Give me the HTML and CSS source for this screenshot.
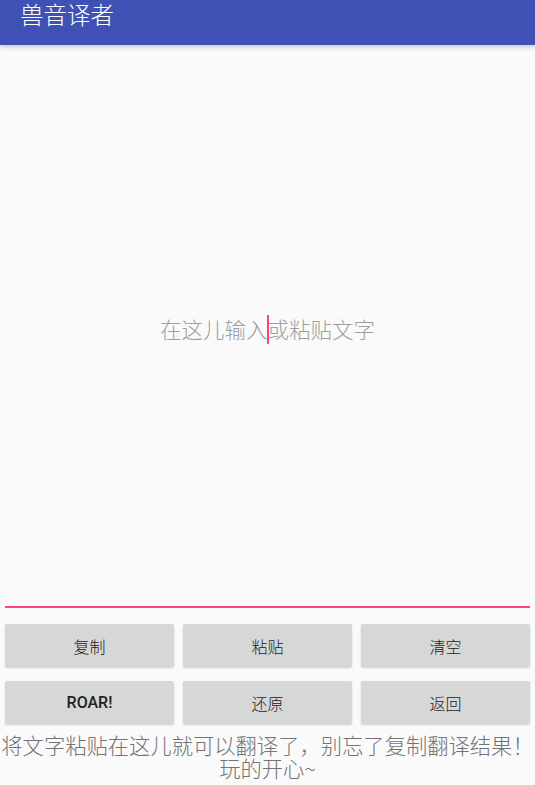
FILE: index.html
```html
<!DOCTYPE html>
<html lang="zh">
<head>
<meta charset="utf-8">
<title>兽音译者</title>
<link rel="stylesheet" href="styles.css">
</head>
<body>
<div class="app">
  <header class="toolbar"><span class="title">兽音译者</span></header>
  <main class="editor">
    <div class="hint"><span>在这儿输入</span><span class="cursor"></span><span>或粘贴文字</span></div>
  </main>
  <div class="underline"></div>
  <div class="buttons">
    <button class="btn">复制</button>
    <button class="btn">粘贴</button>
    <button class="btn">清空</button>
    <button class="btn btn-latin">ROAR!</button>
    <button class="btn">还原</button>
    <button class="btn">返回</button>
  </div>
  <p class="tip">将文字粘贴在这儿就可以翻译了，别忘了复制翻译结果！玩的开心~</p>
</div>
</body>
</html>
```
FILE: styles.css
```css
html, body {
  margin: 0;
  padding: 0;
  background: #fafafa;
}
body {
  font-family: "Noto Sans CJK SC", "Noto Sans", Roboto, sans-serif;
}
.app {
  width: 535px;
  height: 785px;
  display: flex;
  flex-direction: column;
  overflow: hidden;
}
.toolbar {
  height: 45px;
  flex: 0 0 45px;
  background: #3f51b5;
  box-shadow: 0 2px 5px rgba(0, 0, 0, 0.22);
  position: relative;
  z-index: 1;
  box-sizing: border-box;
  padding-left: 20px;
}
.title {
  display: block;
  color: #ffffff;
  font-size: 23.5px;
  line-height: 34px;
  font-weight: 300;
  margin-top: -3px;
}
.editor {
  flex: 0 0 561px;
  display: flex;
  align-items: center;
  justify-content: center;
  box-sizing: border-box;
  padding-top: 7px;
}
.hint {
  color: #9e9e9e;
  font-size: 21.5px;
  line-height: 30px;
  font-weight: 300;
  white-space: nowrap;
}
.cursor {
  display: inline-block;
  width: 2px;
  height: 29px;
  background: #ff4081;
  vertical-align: -6px;
  margin: 0 -1px;
  position: relative;
  z-index: 1;
}
.underline {
  height: 2px;
  flex: 0 0 2px;
  background: #ff4081;
  margin: 0 5px;
}
.buttons {
  display: grid;
  grid-template-columns: repeat(3, 1fr);
  column-gap: 9px;
  row-gap: 14px;
  padding: 16px 5px 0;
}
.btn {
  height: 43px;
  border: none;
  border-radius: 2px;
  background: #d6d7d7;
  box-shadow: 0 1px 2px rgba(0, 0, 0, 0.18);
  color: #222222;
  font-family: "Noto Sans CJK SC", "Noto Sans", sans-serif;
  font-size: 16px;
  font-weight: 300;
  padding: 0;
  margin: 0;
}
.btn-latin {
  font-family: Roboto, "Noto Sans CJK SC", sans-serif;
  font-weight: 500;
  font-size: 16px;
}
.tip {
  margin: 9px 0 0;
  text-align: center;
  color: #737373;
  font-size: 21.3px;
  line-height: 23px;
  font-weight: 300;
}
```
